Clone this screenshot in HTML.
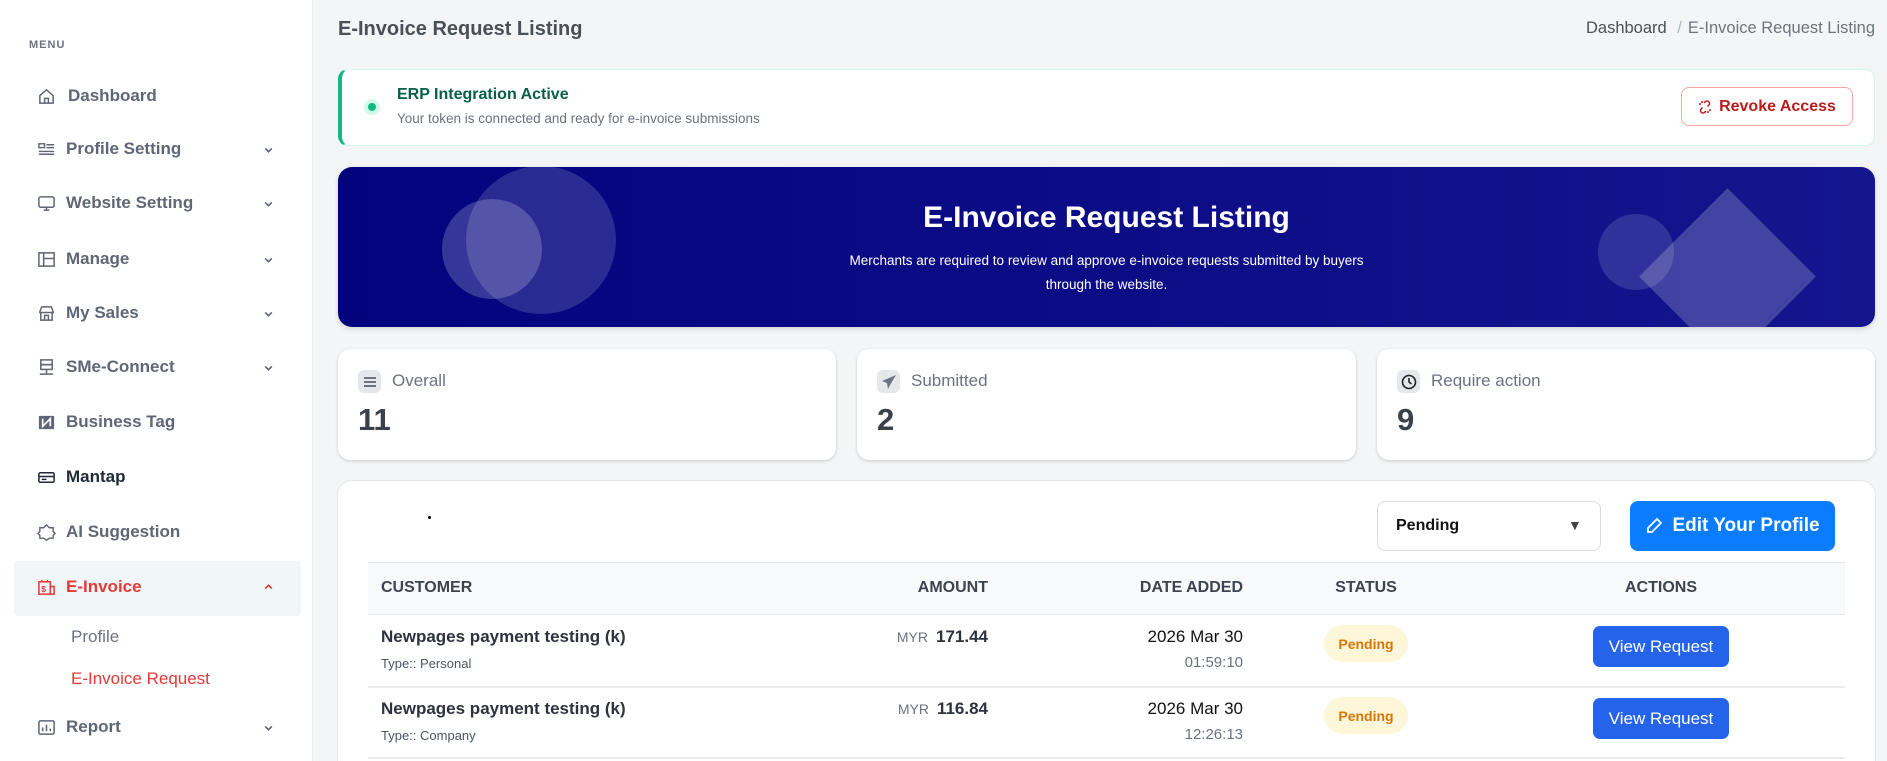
<!DOCTYPE html>
<html style="width:1887px;height:761px;overflow:hidden"><head><meta charset="utf-8"><style>
*{box-sizing:border-box;margin:0;padding:0}
body{width:1887px;height:761px;overflow:hidden;background:#f4f5f7;font-family:"Liberation Sans",sans-serif;position:relative;color:#374151}
.abs{position:absolute}
#side{left:0;top:0;width:313px;height:761px;background:#fff;border-right:1px solid #e9ebef}
.mi{position:absolute;left:0;width:313px;height:30px;display:flex;align-items:center;font-size:17px;font-weight:bold;color:#5f6675}
.mi svg{position:absolute;left:37px;width:19px;height:19px}
.mi span{position:absolute;left:66px}
.mi .chev{position:absolute;left:263px;width:11px;height:11px}
.card{position:absolute;background:#fff;border-radius:12px;box-shadow:0 1px 3px rgba(0,0,0,.18)}
.lbl{position:absolute;left:54px;top:22px;font-size:17px;color:#6b7280}
.ico{position:absolute;left:20px;top:21px;width:23px;height:23px;border-radius:6px;background:#e5e7eb;display:flex;align-items:center;justify-content:center}
.num{position:absolute;left:20px;top:53px;font-size:31px;font-weight:bold;color:#3b4149}
.th{position:absolute;top:579px;font-size:16px;font-weight:bold;color:#3d4350}
.pill{position:absolute;width:84px;height:37px;border-radius:19px;background:#fef6d8;color:#d97706;font-weight:bold;font-size:14px;display:flex;align-items:center;justify-content:center}
.vb{position:absolute;width:136px;height:41px;border-radius:7px;background:#2563eb;color:#fff;font-size:17px;display:flex;align-items:center;justify-content:center}
</style></head><body>
<div id="side" class="abs">
<div class="abs" style="left:29px;top:39px;font-size:11px;font-weight:bold;color:#6b7280;letter-spacing:1px">MENU</div>
<div class="mi" style="top:81px"><svg viewBox="0 0 20 20" fill="none" stroke="#5f6675" stroke-width="1.6"><path d="M3 9l7-6 7 6v8H3z"/><path d="M8 17v-5h4v5"/></svg><span style="left:68px">Dashboard</span></div>
<div class="mi" style="top:134px"><svg viewBox="0 0 20 20" fill="none" stroke="#5f6675" stroke-width="1.5"><rect x="2" y="4" width="6" height="4"/><path d="M10 5h8M10 8h8M2 12h16M2 15h16"/></svg><span>Profile Setting</span><svg class="chev" viewBox="0 0 10 10" fill="none" stroke="#5f6675" stroke-width="1.5"><path d="M2 4l3 3 3-3"/></svg></div>
<div class="mi" style="top:188px"><svg viewBox="0 0 20 20" fill="none" stroke="#5f6675" stroke-width="1.6"><rect x="2" y="3" width="16" height="11" rx="2"/><path d="M7 17h6M10 14v3"/></svg><span>Website Setting</span><svg class="chev" viewBox="0 0 10 10" fill="none" stroke="#5f6675" stroke-width="1.5"><path d="M2 4l3 3 3-3"/></svg></div>
<div class="mi" style="top:244px"><svg viewBox="0 0 20 20" fill="none" stroke="#5f6675" stroke-width="1.6"><rect x="2" y="3" width="16" height="14"/><path d="M7 3v14M7 9h11"/></svg><span>Manage</span><svg class="chev" viewBox="0 0 10 10" fill="none" stroke="#5f6675" stroke-width="1.5"><path d="M2 4l3 3 3-3"/></svg></div>
<div class="mi" style="top:298px"><svg viewBox="0 0 20 20" fill="none" stroke="#5f6675" stroke-width="1.6"><path d="M3 8l2-5h10l2 5v1H3zM4 9v8h12V9M8 17v-5h4v5"/></svg><span>My Sales</span><svg class="chev" viewBox="0 0 10 10" fill="none" stroke="#5f6675" stroke-width="1.5"><path d="M2 4l3 3 3-3"/></svg></div>
<div class="mi" style="top:352px"><svg viewBox="0 0 20 20" fill="none" stroke="#5f6675" stroke-width="1.6"><rect x="4" y="2" width="12" height="5"/><rect x="4" y="7" width="12" height="5"/><path d="M10 12v4M3 17h14"/></svg><span>SMe-Connect</span><svg class="chev" viewBox="0 0 10 10" fill="none" stroke="#5f6675" stroke-width="1.5"><path d="M2 4l3 3 3-3"/></svg></div>
<div class="mi" style="top:407px"><svg viewBox="0 0 20 20"><rect x="2" y="3" width="16" height="14" rx="1" fill="#5f6675"/><path d="M6 6v8l8-8v8" stroke="#fff" stroke-width="1.8" fill="none"/></svg><span>Business Tag</span></div>
<div class="mi" style="top:462px;color:#1f2937"><svg viewBox="0 0 20 20" fill="none" stroke="#1f2937" stroke-width="1.6"><rect x="2" y="5" width="16" height="10" rx="1.5"/><path d="M2 9h16M5 12h5"/></svg><span>Mantap</span></div>
<div class="mi" style="top:517px"><svg viewBox="0 0 20 20" fill="none" stroke="#5f6675" stroke-width="1.5"><path d="M10 2l3 3h4v4l2 2-2 2v3h-4l-3 2-3-2H3v-3l-2-2 2-2V5h4z"/></svg><span>AI Suggestion</span></div>
<div class="abs" style="left:14px;top:561px;width:287px;height:55px;background:#f1f6f9;border-radius:4px"></div>
<div class="mi" style="top:572px;color:#e53935"><svg viewBox="0 0 20 20" fill="none" stroke="#e53935" stroke-width="1.6"><rect x="2" y="4" width="12" height="13"/><path d="M14 9h4v8h-4M5 4V2M11 4V2"/><text x="4.5" y="14.5" font-size="9" fill="#e53935" stroke="none" font-family="Liberation Sans">$</text></svg><span>E-Invoice</span><svg class="chev" viewBox="0 0 10 10" fill="none" stroke="#e53935" stroke-width="1.5"><path d="M2 6l3-3 3 3"/></svg></div>
<div class="abs" style="left:71px;top:627px;font-size:17px;color:#6b7280">Profile</div>
<div class="abs" style="left:71px;top:669px;font-size:17px;color:#e53935">E-Invoice Request</div>
<div class="mi" style="top:712px"><svg viewBox="0 0 20 20" fill="none" stroke="#5f6675" stroke-width="1.6"><rect x="2" y="3" width="16" height="14" rx="1.5"/><path d="M6 14v-4M10 14V7M14 14v-3"/></svg><span>Report</span><svg class="chev" viewBox="0 0 10 10" fill="none" stroke="#5f6675" stroke-width="1.5"><path d="M2 4l3 3 3-3"/></svg></div>
</div>

<div class="abs" style="left:338px;top:18px;font-size:20px;font-weight:bold;color:#495057">E-Invoice Request Listing</div>
<div class="abs" style="right:12px;top:19px;font-size:16.5px;color:#495057">Dashboard <span style="color:#adb5bd;margin:0 6px">/</span><span style="color:#6c757d">E-Invoice Request Listing</span></div>

<div class="abs" style="left:338px;top:69px;width:1537px;height:77px;background:#fff;border:1px solid #d1fae5;border-left:4px solid #10b981;border-radius:10px"></div>
<div class="abs" style="left:364px;top:99px;width:16px;height:16px;border-radius:50%;background:#d1fae5"></div>
<div class="abs" style="left:368px;top:103px;width:8px;height:8px;border-radius:50%;background:#10b981"></div>
<div class="abs" style="left:397px;top:86px;font-size:16px;font-weight:bold;color:#065f46">ERP Integration Active</div>
<div class="abs" style="left:397px;top:111px;font-size:13.5px;color:#6b7280">Your token is connected and ready for e-invoice submissions</div>
<div class="abs" style="left:1681px;top:87px;width:172px;height:39px;border:1px solid #fca5a5;border-radius:8px;display:flex;align-items:center;justify-content:center;color:#b91c1c;font-weight:bold;font-size:16px"><svg width="14" height="14" viewBox="0 0 14 14" fill="none" stroke="#b91c1c" stroke-width="1.5" style="margin-right:7px"><path d="M6 3l1.5-1.5a2.5 2.5 0 013.5 3.5L9.5 6.5M4.5 7.5L3 9a2.5 2.5 0 003.5 3.5L8 11M1 4h2M4 1v2M13 10h-2M10 13v-2"/></svg>Revoke Access</div>

<div class="abs" style="left:338px;top:167px;width:1537px;height:160px;border-radius:14px;overflow:hidden;background:linear-gradient(90deg,#03037e,#15168e);box-shadow:0 2px 6px rgba(0,0,0,.15)">
<div class="abs" style="left:128px;top:-1px;width:150px;height:148px;border-radius:50%;background:rgba(255,255,255,.15)"></div>
<div class="abs" style="left:104px;top:32px;width:100px;height:100px;border-radius:50%;background:rgba(255,255,255,.2)"></div>
<div class="abs" style="left:1260px;top:47px;width:76px;height:76px;border-radius:50%;background:rgba(255,255,255,.13)"></div>
<div class="abs" style="left:1327px;top:47px;width:125px;height:125px;transform:rotate(45deg);background:rgba(255,255,255,.2)"></div>
<div class="abs" style="left:0;width:100%;top:34px;text-align:center;color:#fff;font-size:30px;font-weight:bold">E-Invoice Request Listing</div>
<div class="abs" style="left:0;width:100%;top:82px;text-align:center;color:#fff;font-size:13.5px;line-height:24px">Merchants are required to review and approve e-invoice requests submitted by buyers<br>through the website.</div>
</div>

<div class="card" style="left:338px;top:349px;width:498px;height:111px"><div class="ico"><svg width="14" height="14" viewBox="0 0 14 14" stroke="#6b7280" stroke-width="2"><path d="M1 3h12M1 7h12M1 11h12"/></svg></div><div class="lbl">Overall</div><div class="num">11</div></div>
<div class="card" style="left:857px;top:349px;width:499px;height:111px"><div class="ico"><svg width="16" height="16" viewBox="0 0 16 16"><path d="M15 1L1 7l5 2 1 6 2-4z" fill="#6b7280"/></svg></div><div class="lbl">Submitted</div><div class="num">2</div></div>
<div class="card" style="left:1377px;top:349px;width:498px;height:111px"><div class="ico"><svg width="16" height="16" viewBox="0 0 16 16" fill="none" stroke="#222" stroke-width="1.6"><circle cx="8" cy="8" r="6.5"/><path d="M8 4v4l2.5 2"/></svg></div><div class="lbl">Require action</div><div class="num">9</div></div>

<div class="card" style="left:338px;top:481px;width:1537px;height:295px;border-radius:14px;box-shadow:0 0 0 1px #e5e7eb"></div>
<div class="abs" style="left:428px;top:516px;width:3px;height:3px;background:#000;border-radius:50%"></div>
<div class="abs" style="left:1377px;top:501px;width:224px;height:50px;border:1px solid #d8dbe0;border-radius:8px;background:#fff"><span class="abs" style="left:18px;top:15px;font-size:16px;font-weight:bold;color:#111">Pending</span><span class="abs" style="left:190px;top:15px;font-size:14px;color:#444">▼</span></div>
<div class="abs" style="left:1630px;top:501px;width:205px;height:50px;background:#0a7cff;border-radius:8px;color:#fff;font-weight:bold;font-size:19px;display:flex;align-items:center;justify-content:center"><svg width="18" height="18" viewBox="0 0 18 18" fill="none" stroke="#fff" stroke-width="1.8" style="margin-right:9px"><path d="M12 2l4 4-9 9H3v-4z"/></svg>Edit Your Profile</div>

<div class="abs" style="left:368px;top:562px;width:1477px;height:53px;background:#f8f9fa;border-top:1px solid #e5e7eb;border-bottom:1px solid #e5e7eb"></div>
<div class="th" style="left:381px">CUSTOMER</div>
<div class="th" style="left:888px;width:100px;text-align:right">AMOUNT</div>
<div class="th" style="left:1100px;width:143px;text-align:right">DATE ADDED</div>
<div class="th" style="left:1300px;width:132px;text-align:center">STATUS</div>
<div class="th" style="left:1590px;width:142px;text-align:center">ACTIONS</div>

<div class="abs" style="left:368px;top:686px;width:1477px;height:2px;background:#e9ebef"></div>
<div class="abs" style="left:368px;top:757px;width:1477px;height:2px;background:#e9ebef"></div>

<div class="abs" style="left:381px;top:627px;font-size:17px;font-weight:bold;color:#2d333d">Newpages payment testing (k)</div>
<div class="abs" style="left:381px;top:656px;font-size:13px;color:#4b5563">Type:: Personal</div>
<div class="abs" style="left:800px;width:188px;text-align:right;top:627px;font-size:17px;font-weight:bold;color:#2d333d"><span style="font-size:14px;font-weight:normal;color:#6b7280;margin-right:8px">MYR</span>171.44</div>
<div class="abs" style="left:1100px;width:143px;text-align:right;top:627px;font-size:17px;color:#111">2026 Mar 30</div>
<div class="abs" style="left:1100px;width:143px;text-align:right;top:654px;font-size:15px;color:#6b7280">01:59:10</div>
<div class="pill" style="left:1324px;top:625px">Pending</div>
<div class="vb" style="left:1593px;top:626px">View Request</div>

<div class="abs" style="left:381px;top:699px;font-size:17px;font-weight:bold;color:#2d333d">Newpages payment testing (k)</div>
<div class="abs" style="left:381px;top:728px;font-size:13px;color:#4b5563">Type:: Company</div>
<div class="abs" style="left:800px;width:188px;text-align:right;top:699px;font-size:17px;font-weight:bold;color:#2d333d"><span style="font-size:14px;font-weight:normal;color:#6b7280;margin-right:8px">MYR</span>116.84</div>
<div class="abs" style="left:1100px;width:143px;text-align:right;top:699px;font-size:17px;color:#111">2026 Mar 30</div>
<div class="abs" style="left:1100px;width:143px;text-align:right;top:726px;font-size:15px;color:#6b7280">12:26:13</div>
<div class="pill" style="left:1324px;top:697px">Pending</div>
<div class="vb" style="left:1593px;top:698px">View Request</div>
</body></html>
